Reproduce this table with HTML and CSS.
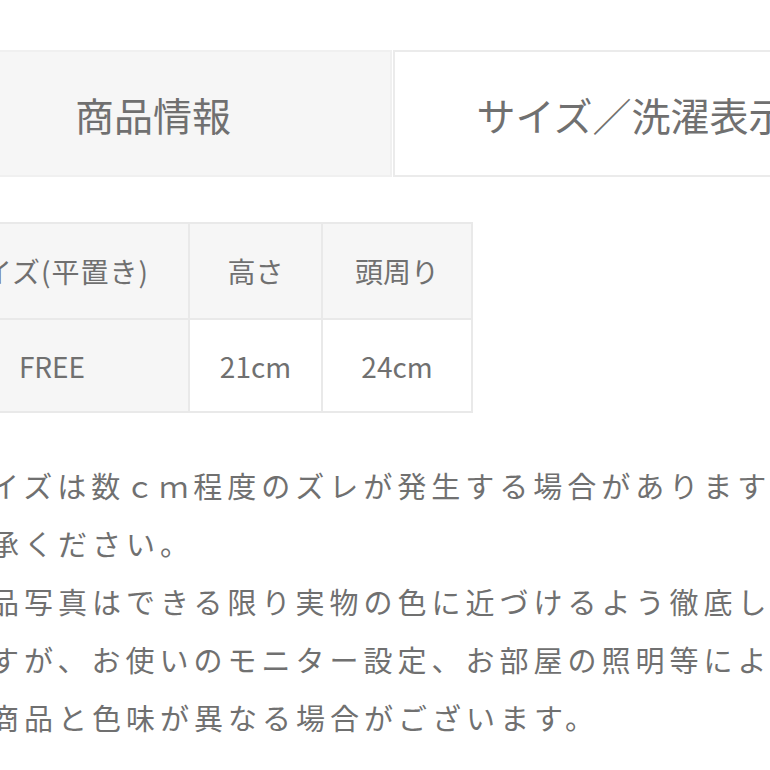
FILE: index.html
```html
<!DOCTYPE html>
<html lang="ja">
<head>
    <meta charset="UTF-8">
    <meta name="viewport" content="width=device-width, initial-scale=1.0">
    <title>商品情報</title>
    <link rel="stylesheet" href="styles.css">
</head>
<body>
    <div class="page">
        <div class="tabs">
            <div class="tab tab-active">商品情報</div>
            <div class="tab">サイズ／洗濯表示</div>
        </div>

        <table class="size-table">
            <tr>
                <th class="col-size">サイズ(平置き)</th>
                <th class="col-height">高さ</th>
                <th class="col-head">頭周り</th>
            </tr>
            <tr>
                <th>FREE</th>
                <td>21cm</td>
                <td>24cm</td>
            </tr>
        </table>

        <p class="notes">
            ※サイズは数ｃｍ程度のズレが発生する場合がありますので予め<br>
            ご了承ください。<br>
            ※商品写真はできる限り実物の色に近づけるよう徹底してお<br>
            りますが、お使いのモニター設定、お部屋の照明等により実<br>
            際の商品と色味が異なる場合がございます。
        </p>
    </div>
</body>
</html>
```

FILE: styles.css
```css
/* 商品ページ（サイズ表） */
body {
    font-family: "Noto Sans CJK JP", "Noto Sans", sans-serif;
    color: #707070;
    background-color: #fff;
    margin: 0;
    overflow: hidden;
}

.page {
    margin-left: -86px;
    width: 1000px;
    padding-top: 50px;
}

.tabs {
    display: flex;
}

.tab {
    width: 478px;
    height: 127px;
    box-sizing: border-box;
    display: flex;
    align-items: center;
    justify-content: center;
    font-size: 39px;
    border: 2px solid #ebebeb;
    background-color: #fff;
}

.tab-active {
    background-color: #f6f6f6;
    border-color: #f0f0f0;
    margin-right: 1px;
}

.size-table {
    margin-top: 45px;
    border-collapse: collapse;
    font-size: 28px;
}

.size-table th,
.size-table td {
    border: 2px solid #e9e9e9;
    text-align: center;
    font-weight: 400;
    height: 91px;
    padding: 0;
}

.size-table th {
    background-color: #f6f6f6;
}

.size-table tr:first-child th {
    height: 94px;
}

.col-size {
    width: 272px;
    letter-spacing: 1px;
}

.col-height {
    width: 131px;
}

.col-head {
    width: 148px;
}

.notes {
    margin: 43px 0 0 8px;
    font-size: 29px;
    letter-spacing: 5px;
    line-height: 58px;
    white-space: nowrap;
}
```
